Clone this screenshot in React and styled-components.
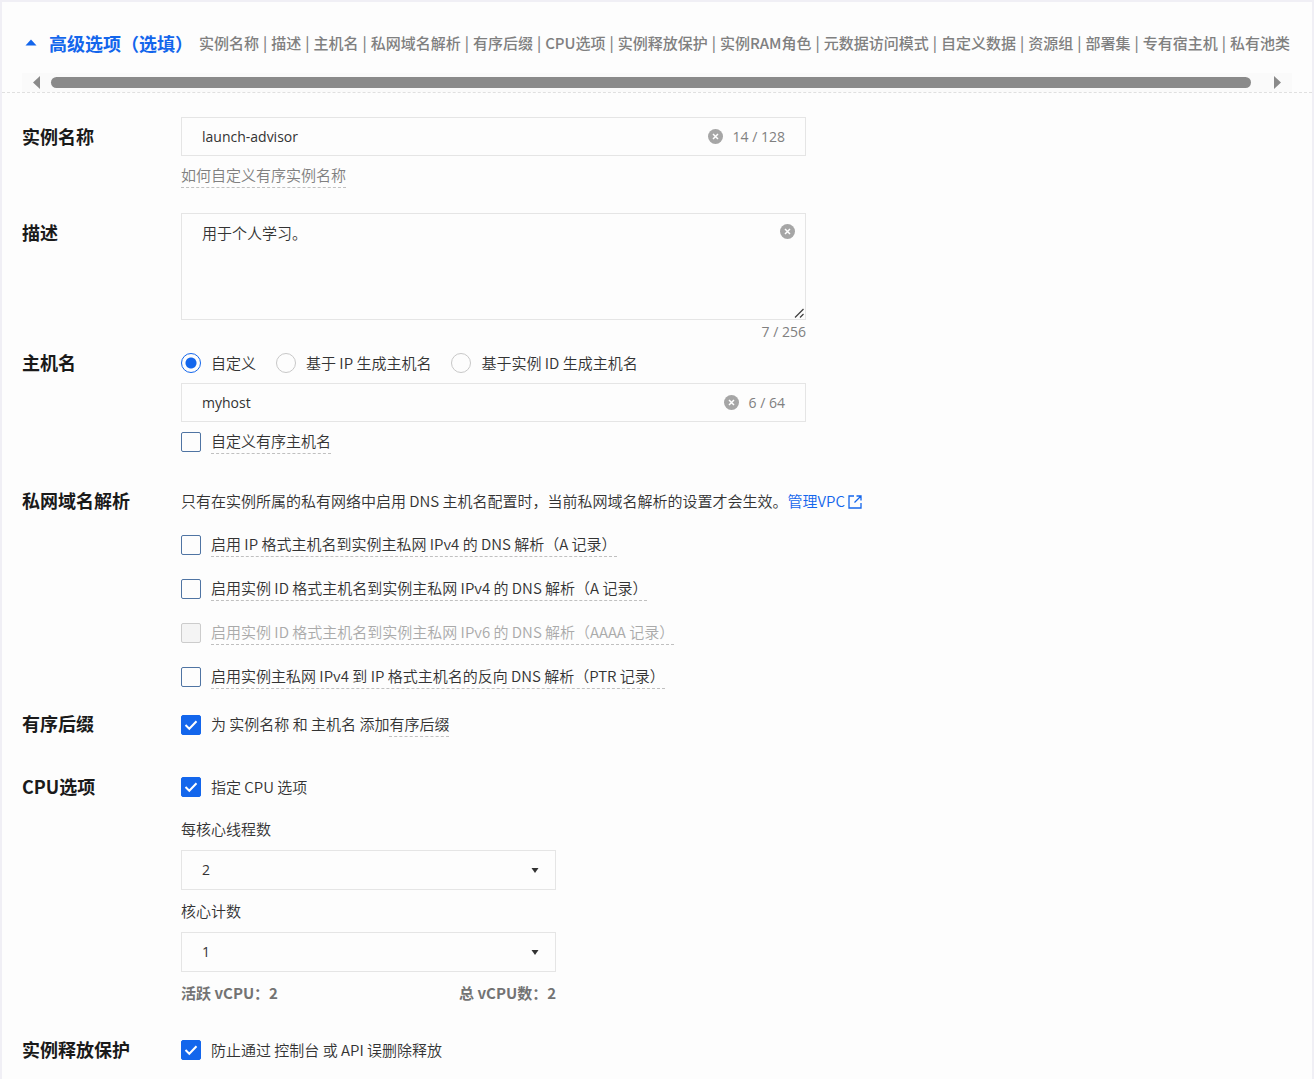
import React, { useState } from "react";
import styled, { createGlobalStyle } from "styled-components";

const GlobalStyle = createGlobalStyle`
  * {
    box-sizing: border-box;
  }
  body {
    margin: 0;
    background-color: #fdfdfd;
    color: #333;
    font-family: "Noto Sans CJK SC", "Noto Sans", sans-serif;
    font-size: 15px;
    font-weight: 350;
    line-height: 24px;
  }
  button, input, textarea, select {
    font: inherit;
    color: inherit;
  }
`;

const Page = styled.main`
  min-height: 100vh;
  border: 2px solid #f0eff5;
  border-bottom: none;
`;

const Header = styled.header`
  padding: 0 20px;
  border-bottom: 1px dashed #e0e0e0;
`;

const HeaderLine = styled.div`
  display: flex;
  align-items: center;
  gap: 6px;
  height: 71px;
  padding-top: 10px;
  overflow: hidden;
`;

const Toggle = styled.button`
  display: flex;
  align-items: center;
  flex: none;
  gap: 12px;
  padding: 0 0 0 3px;
  border: none;
  background: none;
  color: #1366ec;
  font-size: 18px;
  font-weight: bold;
  cursor: pointer;
`;

const Summary = styled.div`
  display: flex;
  flex: 1;
  gap: 4px;
  min-width: 0;
  overflow: hidden;
  color: #808080;
  font-weight: 500;
  white-space: nowrap;
`;

const ScrollTrack = styled.div`
  display: flex;
  align-items: center;
  gap: 11px;
  height: 19px;
  padding: 0 10px;
  background-color: #fafafa;
`;

const ScrollArrow = styled.button`
  display: flex;
  padding: 0;
  border: none;
  background: none;
`;

const ScrollLane = styled.div`
  flex: 1;
`;

const ScrollThumb = styled.div`
  width: 99%;
  height: 11px;
  border-radius: 6px;
  background-color: #8a8a8a;
`;

const Form = styled.form`
  padding: 24px 20px 16px;
`;

const Row = styled.section`
  display: grid;
  grid-template-columns: 159px minmax(0, 1fr);
  margin-bottom: ${(p) => p.$space}px;
`;

const RowTitle = styled.h2`
  margin: 0;
  padding-top: ${(p) => (p.$tall ? 8 : 0)}px;
  color: #1a1a1a;
  font-size: 18px;
  font-weight: bold;
  line-height: 22px;
`;

const Stack = styled.div`
  display: flex;
  flex-direction: column;
  align-items: flex-start;
  gap: ${(p) => p.$gap}px;
  width: 100%;
  max-width: ${(p) => p.$max || "none"};
`;

const Field = styled.div`
  display: flex;
  align-items: center;
  gap: 10px;
  width: 100%;
  height: 39px;
  padding: 0 20px;
  border: 1px solid #e5e5e5;
`;

const TextInput = styled.input`
  flex: 1;
  min-width: 0;
  padding: 0;
  border: none;
  outline: none;
  background: none;
  font-family: "Open Sans", "Noto Sans CJK SC", sans-serif;
  font-size: 14px;
  font-weight: 400;
`;

const Count = styled.span`
  color: #808080;
  font-family: "Open Sans", "Noto Sans CJK SC", sans-serif;
  font-size: 14px;
  font-weight: 400;
`;

const AreaCount = styled(Count)`
  align-self: flex-end;
`;

const ClearButton = styled.button`
  display: flex;
  padding: 0;
  border: none;
  background: none;
  cursor: pointer;
`;

const AreaWrap = styled.div`
  position: relative;
  display: flex;
  width: 100%;

  ${ClearButton} {
    position: absolute;
    top: 11px;
    right: 11px;
  }
`;

const TextArea = styled.textarea`
  width: 100%;
  height: 107px;
  padding: 7px 40px 7px 20px;
  border: 1px solid #e5e5e5;
  outline: none;
  background: none;
  resize: vertical;

  &::-webkit-resizer {
    background: none;
  }
`;

const Grip = styled.svg`
  position: absolute;
  right: 2px;
  bottom: 2px;
  pointer-events: none;
`;

const Dashed = styled.span`
  padding-bottom: 1px;
  border-bottom: 1px dashed #c0c0c0;
  line-height: 22px;
`;

const HelpLink = styled.a`
  padding-bottom: 1px;
  border-bottom: 1px dashed #c0c0c0;
  color: #808080;
  line-height: 22px;
  text-decoration: none;
`;

const RadioGroup = styled.div`
  display: flex;
  flex-wrap: wrap;
  gap: 20px;
`;

const Option = styled.label`
  display: flex;
  align-items: center;
  gap: 10px;
  color: ${(p) => (p.$disabled ? "#aaa" : "#333")};

  ${Dashed} {
    display: inline-block;
  }
`;

const Radio = styled.input`
  appearance: none;
  flex: none;
  width: 20px;
  height: 20px;
  margin: 0;
  border: 1px solid #c8c8c8;
  border-radius: 50%;

  &:checked {
    border-color: #1366ec;
    background: radial-gradient(circle, #1366ec 5px, transparent 6px);
  }
`;

const Box = styled.span`
  display: grid;
  flex: none;
  width: 20px;
  height: 20px;

  > * {
    grid-area: 1 / 1;
    place-self: center;
  }
`;

const Tick = styled.svg`
  visibility: hidden;
  pointer-events: none;
`;

const BoxInput = styled.input`
  appearance: none;
  width: 20px;
  height: 20px;
  margin: 0;
  border: 1px solid #4f74a3;
  border-radius: 2px;

  &:checked {
    border-color: #1366ec;
    background-color: #1366ec;
  }
  &:checked + ${Tick} {
    visibility: visible;
  }
  &:disabled {
    border-color: #ccc;
    background-color: #f4f4f4;
  }
`;

const Notice = styled.p`
  margin: 0;
`;

const VpcLink = styled.a`
  color: #1366ec;
  text-decoration: none;

  svg {
    margin-left: 3px;
    vertical-align: -2px;
  }
`;

const FieldLabel = styled.label`
  line-height: 22px;
`;

const SelectWrap = styled.div`
  display: grid;
  align-items: center;
  width: 100%;

  > * {
    grid-area: 1 / 1;
  }
  svg {
    justify-self: end;
    margin-right: 17px;
    pointer-events: none;
  }
`;

const Select = styled.select`
  appearance: none;
  width: 100%;
  height: 40px;
  padding: 0 40px 0 20px;
  border: 1px solid #e5e5e5;
  border-radius: 0;
  outline: none;
  background: none;
  font-family: "Open Sans", "Noto Sans CJK SC", sans-serif;
  font-size: 14px;
  font-weight: 400;
`;

const Totals = styled.div`
  display: flex;
  justify-content: space-between;
  width: 100%;
  color: #737373;
  font-weight: bold;
  line-height: 22px;
`;

const sections = [
  "实例名称",
  "描述",
  "主机名",
  "私网域名解析",
  "有序后缀",
  "CPU选项",
  "实例释放保护",
  "实例RAM角色",
  "元数据访问模式",
  "自定义数据",
  "资源组",
  "部署集",
  "专有宿主机",
  "私有池类",
];

const dnsOptions = [
  { text: "启用 IP 格式主机名到实例主私网 IPv4 的 DNS 解析（A 记录）" },
  { text: "启用实例 ID 格式主机名到实例主私网 IPv4 的 DNS 解析（A 记录）" },
  {
    text: "启用实例 ID 格式主机名到实例主私网 IPv6 的 DNS 解析（AAAA 记录）",
    disabled: true,
  },
  { text: "启用实例主私网 IPv4 到 IP 格式主机名的反向 DNS 解析（PTR 记录）" },
];

const hostModes = ["自定义", "基于 IP 生成主机名", "基于实例 ID 生成主机名"];

function Clear({ onClick }) {
  return (
    <ClearButton type="button" aria-label="清除" onClick={onClick}>
      <svg width="15" height="15" viewBox="0 0 15 15">
        <circle cx="7.5" cy="7.5" r="7.5" fill="#a6a6a6" />
        <path d="M5 5l5 5M10 5l-5 5" stroke="#fff" strokeWidth="1.5" />
      </svg>
    </ClearButton>
  );
}

function Check({ children, disabled, defaultChecked }) {
  return (
    <Option $disabled={disabled}>
      <Box>
        <BoxInput
          type="checkbox"
          disabled={disabled}
          defaultChecked={defaultChecked}
        />
        <Tick width="14" height="12" viewBox="0 0 14 12">
          <path
            d="M1.5 6l3.8 3.8L12.5 2.2"
            fill="none"
            stroke="#fff"
            strokeWidth="2"
          />
        </Tick>
      </Box>
      {children}
    </Option>
  );
}

function Dropdown({ id, value, options }) {
  return (
    <SelectWrap>
      <Select id={id} defaultValue={value}>
        {options.map((o) => (
          <option key={o}>{o}</option>
        ))}
      </Select>
      <svg width="8" height="5" viewBox="0 0 8 5">
        <path d="M0.5 0h7L4 5z" fill="#333" />
      </svg>
    </SelectWrap>
  );
}

function App() {
  const [name, setName] = useState("launch-advisor");
  const [desc, setDesc] = useState("用于个人学习。");
  const [host, setHost] = useState("myhost");
  const [mode, setMode] = useState(0);

  return (
    <Page>
      <GlobalStyle />
      <Header>
        <HeaderLine>
          <Toggle type="button">
            <svg width="12" height="7" viewBox="0 0 12 7">
              <path d="M6 0.5l5.5 6h-11z" fill="#1366ec" />
            </svg>
            高级选项（选填）
          </Toggle>
          <Summary>
            {sections.map((s, idx) => (
              <React.Fragment key={s}>
                {idx > 0 && <span>|</span>}
                <span>{s}</span>
              </React.Fragment>
            ))}
          </Summary>
        </HeaderLine>
        <ScrollTrack>
          <ScrollArrow type="button" aria-label="向左">
            <svg width="8" height="13" viewBox="0 0 8 13">
              <path d="M8 0v13L1 6.5z" fill="#8a8a8a" />
            </svg>
          </ScrollArrow>
          <ScrollLane>
            <ScrollThumb />
          </ScrollLane>
          <ScrollArrow type="button" aria-label="向右">
            <svg width="8" height="13" viewBox="0 0 8 13">
              <path d="M0 0v13l7-6.5z" fill="#8a8a8a" />
            </svg>
          </ScrollArrow>
        </ScrollTrack>
      </Header>

      <Form>
        <Row $space={25}>
          <RowTitle $tall>
            <label htmlFor="name">实例名称</label>
          </RowTitle>
          <Stack $gap={8} $max="625px">
            <Field>
              <TextInput
                id="name"
                value={name}
                onChange={(e) => setName(e.target.value)}
              />
              <Clear onClick={() => setName("")} />
              <Count>{name.length} / 128</Count>
            </Field>
            <HelpLink href="#">如何自定义有序实例名称</HelpLink>
          </Stack>
        </Row>

        <Row $space={7}>
          <RowTitle $tall>
            <label htmlFor="desc">描述</label>
          </RowTitle>
          <Stack $gap={0} $max="625px">
            <AreaWrap>
              <TextArea
                id="desc"
                value={desc}
                onChange={(e) => setDesc(e.target.value)}
              />
              <Clear onClick={() => setDesc("")} />
              <Grip width="10" height="10" viewBox="0 0 10 10">
                <path
                  d="M1 9.5L9.5 1M6 9.5L9.5 6"
                  stroke="#444"
                  strokeWidth="1.3"
                />
              </Grip>
            </AreaWrap>
            <AreaCount>{desc.length} / 256</AreaCount>
          </Stack>
        </Row>

        <Row $space={35}>
          <RowTitle>
            <label htmlFor="host">主机名</label>
          </RowTitle>
          <Stack $gap={8} $max="625px">
            <RadioGroup>
              {hostModes.map((m, idx) => (
                <Option key={m}>
                  <Radio
                    type="radio"
                    name="mode"
                    checked={mode === idx}
                    onChange={() => setMode(idx)}
                  />
                  {m}
                </Option>
              ))}
            </RadioGroup>
            <Field>
              <TextInput
                id="host"
                value={host}
                onChange={(e) => setHost(e.target.value)}
              />
              <Clear onClick={() => setHost("")} />
              <Count>{host.length} / 64</Count>
            </Field>
            <Check>
              <Dashed>自定义有序主机名</Dashed>
            </Check>
          </Stack>
        </Row>

        <Row $space={23}>
          <RowTitle>私网域名解析</RowTitle>
          <Stack $gap={20}>
            <Notice>
              只有在实例所属的私有网络中启用 DNS
              主机名配置时，当前私网域名解析的设置才会生效。
              <VpcLink href="#">
                管理VPC
                <svg width="14" height="14" viewBox="0 0 14 14">
                  <path
                    d="M6 1H1v12h12V8M8.5 1H13v4.5M13 1L6.5 7.5"
                    fill="none"
                    stroke="#1366ec"
                    strokeWidth="1.3"
                  />
                </svg>
              </VpcLink>
            </Notice>
            {dnsOptions.map((o) => (
              <Check key={o.text} disabled={o.disabled}>
                <Dashed>{o.text}</Dashed>
              </Check>
            ))}
          </Stack>
        </Row>

        <Row $space={38}>
          <RowTitle>有序后缀</RowTitle>
          <Stack $gap={20}>
            <Check defaultChecked>
              <span>
                为 实例名称 和 主机名 添加<Dashed>有序后缀</Dashed>
              </span>
            </Check>
          </Stack>
        </Row>

        <Row $space={34}>
          <RowTitle>CPU选项</RowTitle>
          <Stack $gap={19}>
            <Check defaultChecked>指定 CPU 选项</Check>
            <Stack $gap={10} $max="375px">
              <FieldLabel htmlFor="threads">每核心线程数</FieldLabel>
              <Dropdown id="threads" value="2" options={["1", "2"]} />
              <FieldLabel htmlFor="cores">核心计数</FieldLabel>
              <Dropdown id="cores" value="1" options={["1", "2"]} />
              <Totals>
                <span>活跃 vCPU：2</span>
                <span>总 vCPU数：2</span>
              </Totals>
            </Stack>
          </Stack>
        </Row>

        <Row $space={0}>
          <RowTitle>实例释放保护</RowTitle>
          <Stack $gap={20}>
            <Check defaultChecked>防止通过 控制台 或 API 误删除释放</Check>
          </Stack>
        </Row>
      </Form>
    </Page>
  );
}

export default App;
